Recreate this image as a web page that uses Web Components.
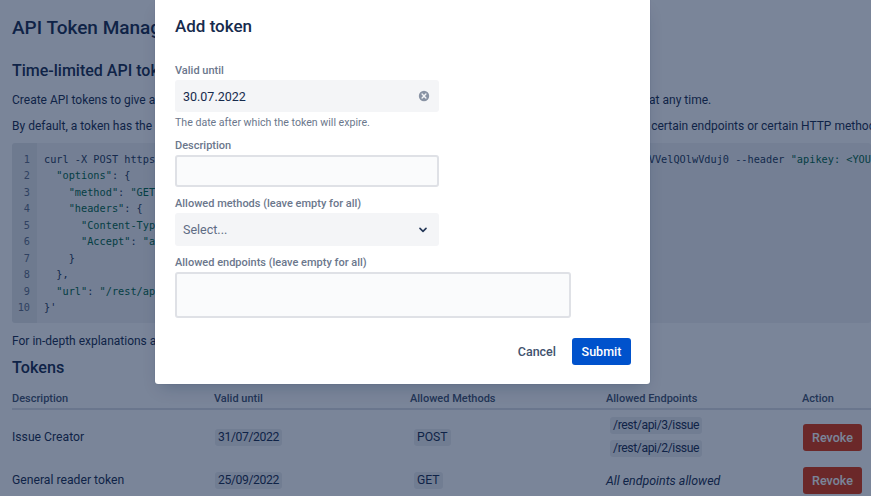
<!DOCTYPE html>
<html lang="en"><head><meta charset="utf-8"><title>API Token Manager</title>
<style>
html,body{margin:0;padding:0;height:100%;overflow:hidden;background:#fff}
body{font-family:Roboto,Inter,"Liberation Sans",sans-serif;color:#172b4d;width:871px;height:496px;position:relative}
</style></head><body>
<token-page>
  <h-title level="1">API Token Manager</h-title>
  <h-title level="2">Time-limited API tokens</h-title>
  <page-text gap="11">Create API tokens to give applications and scripts a controlled access to your Jira data, and you can revoke any of them at any time.</page-text>
  <page-text gap="10">By default, a token has the same permissions as its creator, but you can also restrict what a token may do by letting only certain endpoints or certain HTTP methods.</page-text>
  <code-block></code-block>
  <page-text gap="10">For in-depth explanations and more examples, read the documentation.</page-text>
  <h-title level="3">Tokens</h-title>
  <token-table></token-table>
</token-page>
<modal-layer>
  <span slot="title">Add token</span>
  <form-field label="Valid until" hint="The date after which the token will expire." top="27">
    <text-box kind="date" value="30.07.2022"></text-box>
  </form-field>
  <form-field label="Description" top="8"><text-box kind="empty"></text-box></form-field>
  <form-field label="Allowed methods (leave empty for all)" top="9"><text-box kind="select" value="Select..."></text-box></form-field>
  <form-field label="Allowed endpoints (leave empty for all)" top="9"><text-box kind="area"></text-box></form-field>
  <span slot="cancel">Cancel</span>
  <span slot="submit">Submit</span>
</modal-layer>
<script>
const def=(name,css,html,init)=>customElements.define(name,class extends HTMLElement{
  constructor(){super();this.attachShadow({mode:'open'}).innerHTML=`<style>${css}</style>${typeof html==='string'?html:''}`;}
  connectedCallback(){if(init)init.call(this,this.shadowRoot);}
});
def('token-page',`:host{display:block;padding:0 12px;height:496px;overflow:hidden;box-sizing:border-box;white-space:nowrap}`,`<slot></slot>`);
def('h-title',`:host{display:block;font-weight:500}
 :host([level="1"]){font-size:19px;line-height:24px;padding-top:16px}
 :host([level="2"]){font-size:16px;line-height:20px;margin-top:21px}
 :host([level="3"]){font-size:16.2px;line-height:20px;margin-top:9px}`,`<slot></slot>`);
def('page-text',`:host{display:block;font-size:12px;line-height:16px}`,`<slot></slot>`,function(){
  this.style.marginTop=(this.getAttribute('gap')||10)+'px';});
def('code-block',`:host{display:flex;margin:9px -12px 0 0;height:180px;background:rgba(9,30,66,.06);border-radius:3px;overflow:hidden;
  font:10.25px/16.45px "DejaVu Sans Mono",monospace;color:#006644}
 .n{width:25px;flex:none;padding:8px 7px 0 0;box-sizing:border-box;text-align:right;background:rgba(9,30,66,.05);color:#5e6c84}
 pre{margin:0;padding:8px 0 0 7px;font:inherit;white-space:pre}
 b{font-weight:400;color:#253858}`,'',function(r){
  const lines=[
  `<b>curl -X POST https://gateway.example.com/plugins/token-manager/api/v1/tokens/create?client=ui&key=VVelQOlwVduj0 --header</b> "apikey: &lt;YOUR_KEY&gt;" --data '{`,
  `  "options"<b>: {</b>`,`    "method"<b>:</b> "GET"<b>,</b>`,`    "headers"<b>: {</b>`,`      "Content-Type"<b>:</b> "application/json"<b>,</b>`,
  `      "Accept"<b>:</b> "application/json"`,`    <b>}</b>`,`  <b>},</b>`,`  "url"<b>:</b> "/rest/api/3/issue"`,`<b>}'</b>`];
  r.innerHTML+=`<div class="n">${lines.map((_,i)=>i+1).join('<br>')}</div><pre>${lines.join('\n')}</pre>`;
});
def('token-table',`:host{display:block;margin:13px -12px 0 0;font-size:12.2px}
 .row{display:grid;grid-template-columns:202px 196px 196px 196px 1fr;align-items:center}
 .head{font-size:11px;font-weight:500;color:#42526e;align-items:start;line-height:14px;padding-top:1px;border-bottom:2px solid rgba(9,30,66,.14);box-sizing:border-box;height:19px}
 .r1{height:54px}.r2{height:32px}
 .chip{display:inline-block;background:rgba(9,30,66,.08);border-radius:3px;padding:0 3px;line-height:17px;margin-left:1px}
 .t{letter-spacing:-.4px}
 .m{margin-left:4px}
 .eps{display:flex;flex-direction:column;gap:6.5px;align-items:flex-start}
 .eps .chip{margin-left:4px}
 em{font-style:italic;font-size:12.4px}
 button{all:unset;width:59px;height:27px;background:#de350b;border-radius:3px;text-align:center;color:#fff;font:500 12.5px/27px Roboto,sans-serif;margin-left:1px}`,
 `<div class="row head"><span>Description</span><span>Valid until</span><span>Allowed Methods</span><span>Allowed Endpoints</span><span>Action</span></div>
  <div class="row r1"><span>Issue Creator</span><span><span class="chip t">31/07/2022</span></span><span><span class="chip m">POST</span></span>
   <span class="eps"><span class="chip t">/rest/api/3/issue</span><span class="chip t">/rest/api/2/issue</span></span><button>Revoke</button></div>
  <div class="row r2"><span>General reader token</span><span><span class="chip t">25/09/2022</span></span><span><span class="chip m">GET</span></span><em>All endpoints allowed</em><button>Revoke</button></div>`);
def('modal-layer',`:host{position:absolute;inset:0;background:rgba(9,30,66,.54);display:block}
 .m{position:absolute;left:155px;top:0;width:495px;height:384px;box-sizing:border-box;background:#fff;padding:0 19px 0 20px;border-radius:0 0 3px 3px;box-shadow:0 0 1px rgba(9,30,66,.31),0 8px 16px -6px rgba(9,30,66,.25);display:flex;flex-direction:column}
 h1{margin:16px 0 0;font-size:17px;line-height:20px;font-weight:500;color:#172b4d}
 .f{flex:1}
 footer{display:flex;justify-content:flex-end;align-items:center;gap:16px;padding-bottom:19px}
 .c{font-size:12.5px;font-weight:500;color:#42526e}
 .s{background:#0052cc;color:#fff;font-size:12.5px;font-weight:500;width:59px;height:27px;line-height:27px;text-align:center;border-radius:3px}`,
 `<div class="m" role="dialog"><h1><slot name="title"></slot></h1><div class="f"><slot></slot></div>
  <footer><span class="c"><slot name="cancel"></slot></span><span class="s"><slot name="submit"></slot></span></footer></div>`);
def('form-field',`:host{display:block}
 label{display:block;font-size:11px;font-weight:500;line-height:14px;color:#6b778c;padding-top:1px;margin-bottom:2px}
 .h{font-size:10.6px;line-height:14px;color:#6b778c;margin-top:4px}`,'',function(r){
  this.style.marginTop=(this.getAttribute('top')||0)+'px';
  const h=this.getAttribute('hint');
  r.innerHTML+=`<label>${this.getAttribute('label')}</label><slot></slot>${h?`<div class="h">${h}</div>`:''}`;
});
def('text-box',`:host{display:flex;align-items:center;justify-content:space-between;box-sizing:border-box;width:264px;height:32px;border-radius:3px;font-size:12.5px;padding:0 8px;background:#f4f5f7;color:#172b4d}
 :host([kind="empty"]),:host([kind="area"]){background:#fafbfc;border:2px solid #dfe1e6}
 :host([kind="select"]){color:#5e6c84;height:33px}
 :host([kind="area"]){width:396px;height:46px}
 svg{display:block;flex:none}`,'',function(r){
  const k=this.getAttribute('kind');
  const icons={date:`<svg width="12" height="12" viewBox="0 0 12 12" style="margin-right:1px"><circle cx="6" cy="6" r="5.2" fill="#8993a4"/><path d="M4.1 4.1l3.8 3.8M7.9 4.1L4.1 7.9" stroke="#f4f5f7" stroke-width="1.4" stroke-linecap="round"/></svg>`,
   select:`<svg width="8" height="6" viewBox="0 0 8 6" style="margin-right:4px"><path d="M1 1.4L4 4.4l3-3" fill="none" stroke="#253858" stroke-width="1.6" stroke-linecap="round" stroke-linejoin="round"/></svg>`};
  r.innerHTML+=`<span>${this.getAttribute('value')||''}</span>${icons[k]||''}`;
});
</script>
</body></html>
